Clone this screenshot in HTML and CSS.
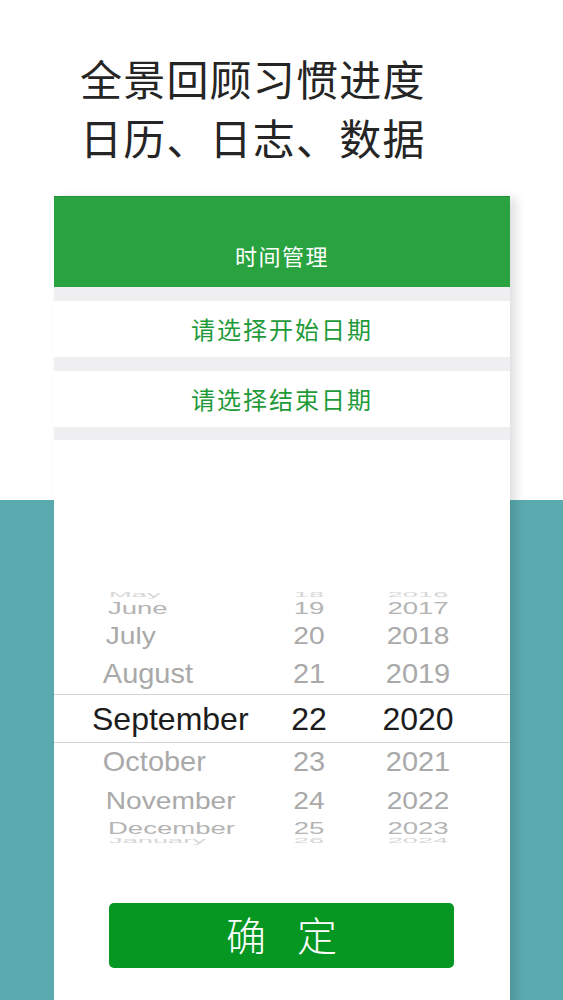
FILE: index.html
```html
<!DOCTYPE html>
<html lang="zh-CN">
<head>
<meta charset="utf-8">
<title>时间管理</title>
<link rel="stylesheet" href="styles.css">
</head>
<body>
<div class="page">
  <div class="hero">
    <p class="hero-line">全景回顾习惯进度</p>
    <p class="hero-line">日历、日志、数据</p>
  </div>
  <div class="card">
    <div class="card-head">时间管理</div>
    <div class="options">
      <div class="option">请选择开始日期</div>
      <div class="option">请选择结束日期</div>
    </div>
    <div class="picker">
      <div class="prow h0 s4"><span class="m">May</span><span class="d">18</span><span class="y">2016</span></div>
      <div class="prow h1 s3"><span class="m">June</span><span class="d">19</span><span class="y">2017</span></div>
      <div class="prow h2 s2"><span class="m">July</span><span class="d">20</span><span class="y">2018</span></div>
      <div class="prow h3 s1"><span class="m">August</span><span class="d">21</span><span class="y">2019</span></div>
      <div class="prow h4 sel"><span class="m">September</span><span class="d">22</span><span class="y">2020</span></div>
      <div class="prow h5 s1"><span class="m">October</span><span class="d">23</span><span class="y">2021</span></div>
      <div class="prow h6 s2"><span class="m">November</span><span class="d">24</span><span class="y">2022</span></div>
      <div class="prow h7 s3"><span class="m">December</span><span class="d">25</span><span class="y">2023</span></div>
      <div class="prow h8 s4"><span class="m">January</span><span class="d">26</span><span class="y">2024</span></div>
    </div>
    <div class="actions">
      <button class="confirm" type="button">确 定</button>
    </div>
  </div>
</div>
</body>
</html>
```

FILE: styles.css
```css
html, body {
  margin: 0;
  padding: 0;
  height: 100%;
  overflow: hidden;
}

body {
  background: linear-gradient(to bottom, #ffffff 0, #ffffff 500px, #5aabb0 500px, #5aabb0 100%);
  font-family: "Noto Sans CJK SC", "Noto Sans", sans-serif;
}

.page {
  width: 563px;
}

.hero {
  padding: 48px 0 0 80px;
}

.hero-line {
  margin: 0;
  font-size: 42px;
  line-height: 59px;
  letter-spacing: 1.2px;
  color: #252525;
  font-weight: 400;
}

.card {
  margin: 30px 0 0 54px;
  width: 456px;
  height: 900px;
  background: #ffffff;
  box-shadow: 6px 2px 10px rgba(0, 0, 0, 0.13);
}

.card-head {
  height: 91px;
  box-sizing: border-box;
  padding-top: 43px;
  background: #29a340;
  border-top: 1px solid #23903a;
  color: #ffffff;
  text-align: center;
  font-size: 22px;
  line-height: 30px;
  letter-spacing: 1.5px;
}

.options {
  background: #efeff1;
  padding: 14px 0 13px;
  display: flex;
  flex-direction: column;
  gap: 14px;
}

.option {
  height: 56px;
  background: #ffffff;
  display: flex;
  align-items: center;
  justify-content: center;
  color: #1f9a3a;
  font-size: 24px;
  letter-spacing: 2px;
  padding-bottom: 2px;
  box-sizing: border-box;
}

.picker {
  padding-top: 152px;
  font-family: "Liberation Sans", Arial, sans-serif;
  font-size: 32px;
  color: #a9a9a9;
}

.prow {
  display: flex;
  align-items: center;
  line-height: 1;
}

.prow span {
  display: block;
  flex: none;
  white-space: nowrap;
}

.prow .m {
  width: 168px;
  padding-left: 38px;
  transform-origin: 152px 50%;
}

.prow .d {
  width: 98px;
  text-align: center;
  transform-origin: 50% 50%;
}

.prow .y {
  width: 120px;
  text-align: center;
  transform-origin: 50% 50%;
}

.h0 { height: 6px; }
.h1 { height: 20px; }
.h2 { height: 36px; }
.h3 { height: 40px; }
.h4 { height: 49px; }
.h5 { height: 37px; }
.h6 { height: 41px; }
.h7 { height: 13px; }
.h8 { height: 13px; }

.sel {
  box-sizing: border-box;
  border-top: 1px solid #d4d4d6;
  border-bottom: 1px solid #d4d4d6;
  color: #1c1c1c;
}

.s1 span { transform: scale(0.905, 0.86); }
.s2 span { transform: scale(0.88, 0.74); }
.s3 span { transform: scale(0.86, 0.5); color: #b4b4b4; }
.s4 span { transform: scale(0.85, 0.2); color: #d6d6d6; }

.actions {
  padding: 56px 0 0 55px;
}

.confirm {
  display: block;
  width: 345px;
  height: 65px;
  border: 0;
  border-radius: 5px;
  background: #069622;
  color: #ffffff;
  font-family: "Noto Sans CJK SC", "Noto Sans", sans-serif;
  font-size: 40px;
  font-weight: 300;
  word-spacing: 22px;
  line-height: 63px;
  padding: 0 0 2px;
  text-align: center;
}
```
